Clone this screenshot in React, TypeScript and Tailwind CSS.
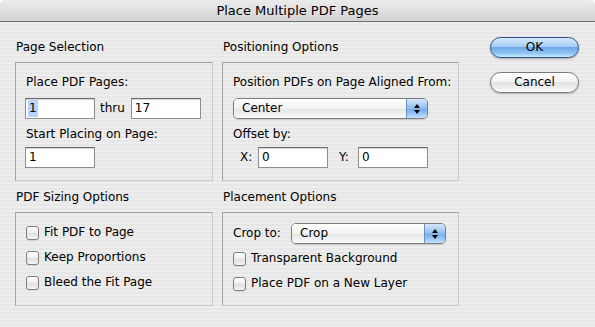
import React from 'react';

const font = "font-['DejaVu_Sans',sans-serif] text-[12px] leading-[15px] text-black";

const TextBox = ({ value, width, selected }: { value: string; width: string; selected?: boolean }) => (
  <div
    className={`${width} h-[21px] bg-white border border-[#8e8e8e] border-t-[#6b6b6b] shadow-[inset_0_1px_1px_rgba(0,0,0,0.18)] flex items-stretch pl-[2px] py-[1px]`}
  >
    <span className={selected ? 'bg-[#b5d5ff] px-[1px] flex items-center' : 'px-[1px] flex items-center'}>{value}</span>
  </div>
);

const PopUp = ({ value, width }: { value: string; width: string }) => (
  <div
    className={`${width} h-[21px] flex rounded-[5px] border border-[#7d7d7d] overflow-hidden shadow-[0_1px_1px_rgba(0,0,0,0.15)]`}
  >
    <div className="flex-1 flex items-center pl-[8px] bg-[linear-gradient(#ffffff,#f1f1f1_50%,#e4e4e4_51%,#fafafa)]">
      {value}
    </div>
    <div className="w-[21px] flex flex-col items-center justify-center gap-[2px] border-l border-[#6d8fbf] bg-[linear-gradient(#d7e8fb,#8dbdf0_50%,#6fa9ea_51%,#bfe2ff)]">
      <div className="w-0 h-0 border-x-[3px] border-x-transparent border-b-[4px] border-b-black" />
      <div className="w-0 h-0 border-x-[3px] border-x-transparent border-t-[4px] border-t-black" />
    </div>
  </div>
);

const Checkbox = ({ label }: { label: string }) => (
  <div className="flex items-center gap-[5px] h-[25px] whitespace-nowrap">
    <div className="w-[13px] h-[14px] rounded-[3px] border border-[#7f7f7f] bg-[linear-gradient(#ffffff,#eeeeee_50%,#dedede_51%,#f6f6f6)] shadow-[0_1px_0_rgba(0,0,0,0.08)]" />
    <span>{label}</span>
  </div>
);

const Group = ({ title, height, children }: { title: string; height: string; children: React.ReactNode }) => (
  <div className="flex flex-col">
    <div className="h-[22px] pl-[1px]">{title}</div>
    <div className={`${height} border border-[#a3a3a3] border-b-[#c9c9c9] border-r-[#c9c9c9] px-[10px]`}>
      {children}
    </div>
  </div>
);

const AquaButton = ({ label, primary }: { label: string; primary?: boolean }) => (
  <div
    className={
      primary
        ? 'w-[89px] h-[21px] rounded-full border border-[#34528a] bg-[linear-gradient(#d6e9fb,#a6cdf3_45%,#6fa8e6_50%,#8ec4f5_80%,#c8ecff)] flex items-center justify-center shadow-[0_1px_2px_rgba(0,0,0,0.3)]'
        : 'w-[89px] h-[21px] rounded-full border border-[#7a7a7a] bg-[linear-gradient(#ffffff,#f4f4f4_45%,#e2e2e2_50%,#efefef_80%,#ffffff)] flex items-center justify-center shadow-[0_1px_2px_rgba(0,0,0,0.25)]'
    }
  >
    {label}
  </div>
);

export default function App() {
  return (
    <div className={`w-[595px] h-[327px] overflow-hidden flex flex-col ${font}`}>
      <div className="h-[22px] shrink-0 flex items-center justify-center border-b border-[#6e6e6e] bg-[linear-gradient(#ececec,#d3d3d3)] rounded-t-[5px] text-[13px]">
        Place Multiple PDF Pages
      </div>
      <div className="flex-1 flex pl-[15px] pt-[18px] bg-[repeating-linear-gradient(#ededed_0px,#ededed_2px,#e7e7e7_2px,#e7e7e7_4px)]">
        <div className="w-[198px] flex flex-col gap-[9px]">
          <Group title="Page Selection" height="h-[119px]">
            <div className="pt-[12px] flex flex-col">
              <div className="h-[23px]">Place PDF Pages:</div>
              <div className="flex items-center -ml-[1px]">
                <TextBox value="1" width="w-[70px]" selected />
                <span className="ml-[5px] mr-[6px]">thru</span>
                <TextBox value="17" width="w-[70px]" />
              </div>
              <div className="h-[28px] pt-[8px]">Start Placing on Page:</div>
              <div className="-ml-[1px]">
                <TextBox value="1" width="w-[70px]" />
              </div>
            </div>
          </Group>
          <Group title="PDF Sizing Options" height="h-[94px]">
            <div className="pt-[7px] flex flex-col">
              <Checkbox label="Fit PDF to Page" />
              <Checkbox label="Keep Proportions" />
              <Checkbox label="Bleed the Fit Page" />
            </div>
          </Group>
        </div>
        <div className="w-[237px] ml-[9px] flex flex-col gap-[9px]">
          <Group title="Positioning Options" height="h-[119px]">
            <div className="pt-[12px] flex flex-col">
              <div className="h-[23px] whitespace-nowrap">Position PDFs on Page Aligned From:</div>
              <PopUp value="Center" width="w-[195px]" />
              <div className="h-[28px] pt-[8px]">Offset by:</div>
              <div className="flex items-center">
                <span className="ml-[7px] w-[18px]">X:</span>
                <TextBox value="0" width="w-[70px]" />
                <span className="ml-[11px] w-[19px]">Y:</span>
                <TextBox value="0" width="w-[70px]" />
              </div>
            </div>
          </Group>
          <Group title="Placement Options" height="h-[94px]">
            <div className="pt-[10px] flex flex-col">
              <div className="flex items-center h-[21px] mb-[2px]">
                <span className="w-[58px]">Crop to:</span>
                <PopUp value="Crop" width="w-[155px]" />
              </div>
              <Checkbox label="Transparent Background" />
              <Checkbox label="Place PDF on a New Layer" />
            </div>
          </Group>
        </div>
        <div className="ml-[31px] flex flex-col gap-[14px] -mt-[3px]">
          <AquaButton label="OK" primary />
          <AquaButton label="Cancel" />
        </div>
      </div>
    </div>
  );
}
